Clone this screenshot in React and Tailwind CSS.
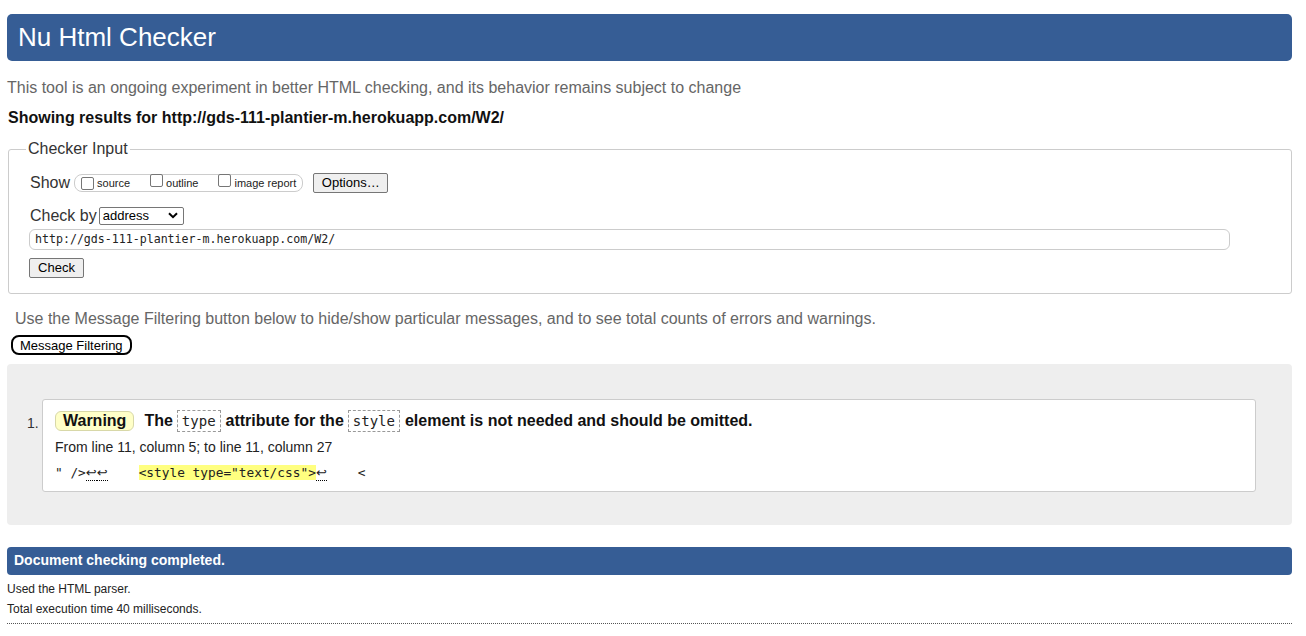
import React from "react";

const mono = { fontFamily: '"DejaVu Sans Mono", "Liberation Mono", monospace' };

function Btn({ children, className = "" }) {
  return (
    <div
      className={
        "inline-flex items-center justify-center h-[20px] px-[7px] bg-[#efefef] border border-[#767676] rounded-[2px] text-[13px] text-black " +
        className
      }
    >
      {children}
    </div>
  );
}

function Box() {
  return (
    <span className="inline-block w-[13px] h-[13px] border border-[#767676] rounded-[2px] bg-white" />
  );
}

function Code({ children }) {
  return (
    <span
      className="inline-block border border-dashed border-[#999] px-[4px] leading-[20px] text-[14px] font-normal text-[#222] align-middle"
      style={mono}
    >
      {children}
    </span>
  );
}

function Ret() {
  return (
    <span
      className="inline-block w-[11px] text-center border-b border-dotted border-black leading-[14px] text-[13px]"
      style={{ fontFamily: '"DejaVu Sans", sans-serif' }}
    >
      ↩
    </span>
  );
}

export default function App() {
  return (
    <div
      className="w-[1306px] h-[636px] bg-white text-black overflow-hidden"
      style={{ fontFamily: '"Liberation Sans", Arial, sans-serif' }}
    >
      <div className="pl-[7px] pt-[14px] w-[1292px]">
        {/* Header */}
        <div className="h-[47px] bg-[#365d95] rounded-[5px] flex items-center pl-[11px]">
          <h1 className="text-[26px] text-white leading-none font-normal -mt-[1px]">Nu Html Checker</h1>
        </div>

        <p className="mt-[18px] text-[16px] leading-[18px] text-[#666]">
          This tool is an ongoing experiment in better HTML checking, and its behavior remains subject to change
        </p>
        <p className="mt-[12px] ml-[1px] text-[16px] leading-[18px] font-bold text-[#111]">
          Showing results for http://gds-111-plantier-m.herokuapp.com/W2/
        </p>

        {/* Checker Input */}
        <fieldset className="mt-[13px] ml-[1px] w-[1284px] border border-[#ccc] rounded-[3px] pl-[20px] pr-[20px] pb-[14px]">
          <legend className="-ml-[3px] px-[2px] text-[16px] leading-[18px] text-[#333]">Checker Input</legend>
          <div className="mt-[15px] flex items-center h-[20px]">
            <span className="text-[16px] text-[#333] ml-[1px]">Show</span>
            <div className="ml-[4px] h-[18px] flex items-center border border-[#ccc] rounded-[8px] pl-[6px] pr-[6px] text-[11px] text-[#222]">
              <Box />
              <span className="ml-[3px]">source</span>
              <span className="ml-[20px]"><Box /></span>
              <span className="ml-[3px]">outline</span>
              <span className="ml-[20px]"><Box /></span>
              <span className="ml-[3px]">image report</span>
            </div>
            <Btn className="ml-[10px] w-[75px]">Options…</Btn>
          </div>
          <div className="mt-[13px] flex items-center h-[19px]">
            <span className="text-[16px] text-[#333] ml-[1px]">Check by</span>
            <div className="ml-[2px] w-[85px] h-[18px] border border-[#767676] rounded-[2px] flex items-center justify-between pl-[3px] pr-[5px] text-[13px]">
              <span>address</span>
              <svg width="10" height="7" viewBox="0 0 10 7">
                <path d="M1 1.2 L5 5.2 L9 1.2" fill="none" stroke="#000" strokeWidth="2" />
              </svg>
            </div>
          </div>
          <div
            className="mt-[4px] w-[1201px] h-[21px] border border-[#ccc] rounded-[6px] flex items-center pl-[5px] text-[11.6px] text-[#222]"
            style={mono}
          >
            http://gds-111-plantier-m.herokuapp.com/W2/
          </div>
          <Btn className="mt-[8px] w-[55px]">Check</Btn>
        </fieldset>

        <p className="mt-[16px] ml-[8px] text-[16px] leading-[18px] text-[#666]">
          Use the Message Filtering button below to hide/show particular messages, and to see total counts of errors and warnings.
        </p>
        <div className="mt-[7px] ml-[4px] inline-flex items-center h-[20px] px-[7px] border-2 border-black rounded-[8px] text-[13px]">
          Message Filtering
        </div>

        {/* Results */}
        <div className="mt-[7px] h-[161px] bg-[#eee] rounded-[4px] pt-[35px] pl-[20px] pr-[36px]">
          <div className="flex">
            <span className="w-[15px] pt-[14px] text-[14px] text-[#333]">1.</span>
            <div className="w-[1215px] h-[93px] bg-white border border-[#ccc] rounded-[3px] pl-[12px] pt-[9px]">
              <div className="flex items-center text-[16px] font-bold text-[#111] h-[24px]">
                <span className="inline-flex items-center h-[20px] px-[7px] bg-[#ffffc8] border border-[#d8d8a8] rounded-[6px]">Warning</span>
                <span className="ml-[10px]">The</span>
                <span className="ml-[4px]"><Code>type</Code></span>
                <span className="ml-[5px]">attribute for the</span>
                <span className="ml-[4px]"><Code>style</Code></span>
                <span className="ml-[5px]">element is not needed and should be omitted.</span>
              </div>
              <p className="mt-[6px] text-[14px] leading-[16px] text-[#222]">
                From line 11, column 5; to line 11, column 27
              </p>
              <p className="mt-[10px] text-[12.8px] leading-[16px] whitespace-pre text-[#222]" style={mono}>
                {'" />'}
                <Ret />
                <Ret />
                {"    "}
                <span className="bg-[#ffff80]">{'<style type="text/css">'}</span>
                <Ret />
                {"    <"}
              </p>
            </div>
          </div>
        </div>

        {/* Footer */}
        <div className="mt-[22px] h-[28px] bg-[#365d95] rounded-[4px] flex items-center pl-[7px]">
          <span className="text-[14px] font-bold text-white">Document checking completed.</span>
        </div>
        <p className="mt-[7px] text-[12px] leading-[14px] text-[#222]">Used the HTML parser.</p>
        <p className="mt-[6px] text-[12px] leading-[14px] text-[#222]">Total execution time 40 milliseconds.</p>
        <div className="mt-[7px] border-b border-dotted border-[#555]" />
      </div>
    </div>
  );
}
